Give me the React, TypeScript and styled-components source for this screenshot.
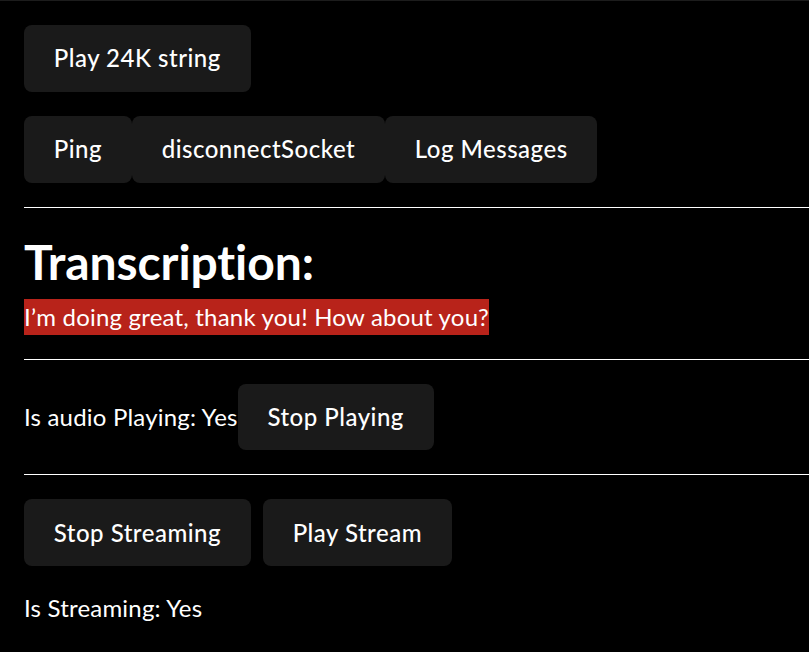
import React from "react";
import styled, { createGlobalStyle } from "styled-components";

const GlobalStyle = createGlobalStyle`
  html, body {
    margin: 0;
    padding: 0;
    background: #000000;
  }
  body {
    font-family: "Lato", "Noto Sans", sans-serif;
    font-size: 24px;
    line-height: 1.5;
    color: #ffffff;
    letter-spacing: 0.2px;
    -webkit-font-smoothing: antialiased;
  }
  #root {
    min-height: 652px;
  }
`;

const Page = styled.main`
  box-sizing: border-box;
  min-height: 652px;
  border-top: 1px solid #1c1c1c;
  padding: 24px 0 24px 24px;
  display: flex;
  flex-direction: column;
  gap: 24px;
`;

const ButtonRow = styled.div<{ $gap?: number }>`
  display: flex;
  align-items: center;
  gap: ${(p) => p.$gap ?? 0}px;
`;

const Button = styled.button`
  font-family: inherit;
  font-size: 1em;
  font-weight: 500;
  line-height: 1.5;
  letter-spacing: 0.5px;
  color: #ffffff;
  background-color: #1a1a1a;
  border: 1px solid transparent;
  border-radius: 8px;
  padding: 0.6em 1.2em;
  cursor: pointer;
  white-space: nowrap;
`;

const Divider = styled.hr`
  margin: 0;
  border: 0;
  height: 1px;
  background: #ffffff;
`;

const TranscriptSection = styled.section`
  display: flex;
  flex-direction: column;
  align-items: flex-start;
`;

const Heading = styled.h1`
  margin: 0 0 7px;
  font-size: 48px;
  font-weight: 700;
  line-height: 60px;
  letter-spacing: -0.1px;
  color: #ffffff;
`;

const Transcript = styled.p`
  margin: 0;
  background: #b8231a;
  color: #ffffff;
  line-height: 36px;
`;

const Label = styled.span`
  line-height: 36px;
  white-space: nowrap;
`;

const Status = styled.p`
  margin: 0;
  line-height: 36px;
`;

export default function App() {
  return (
    <>
      <GlobalStyle />
      <Page>
        <ButtonRow>
          <Button>Play 24K string</Button>
        </ButtonRow>
        <ButtonRow>
          <Button>Ping</Button>
          <Button>disconnectSocket</Button>
          <Button>Log Messages</Button>
        </ButtonRow>
        <Divider />
        <TranscriptSection>
          <Heading>Transcription:</Heading>
          <Transcript>I’m doing great, thank you! How about you?</Transcript>
        </TranscriptSection>
        <Divider />
        <ButtonRow>
          <Label>Is audio Playing: Yes</Label>
          <Button>Stop Playing</Button>
        </ButtonRow>
        <Divider />
        <ButtonRow $gap={12}>
          <Button>Stop Streaming</Button>
          <Button>Play Stream</Button>
        </ButtonRow>
        <Status>Is Streaming: Yes</Status>
      </Page>
    </>
  );
}
